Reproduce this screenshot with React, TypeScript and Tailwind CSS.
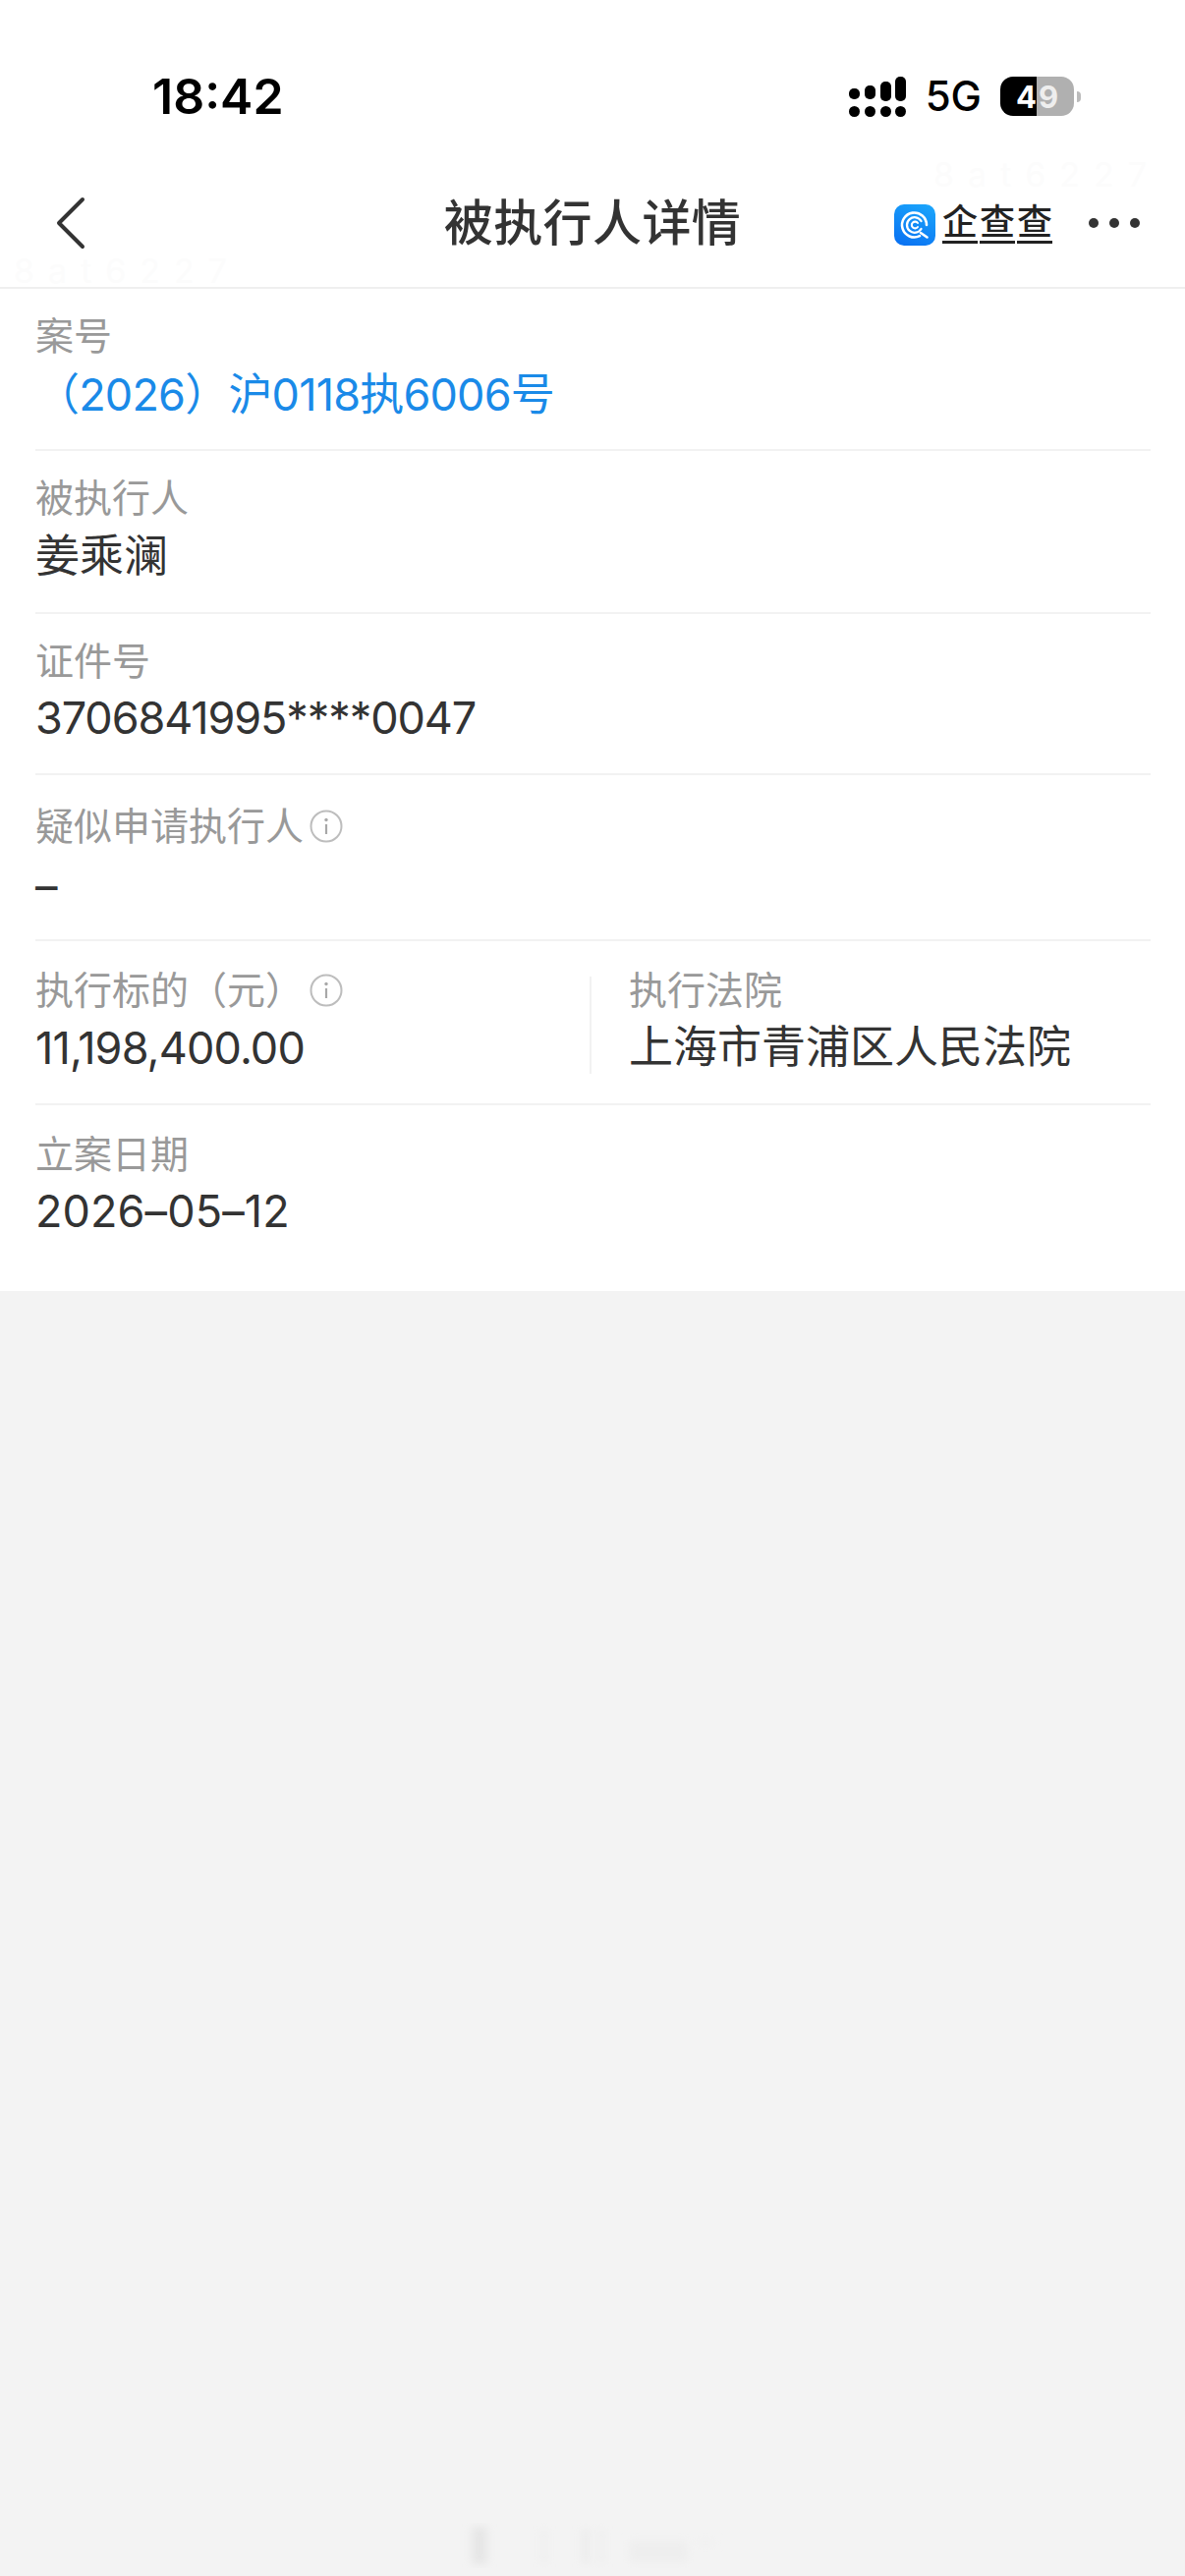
import React from 'react';

const InfoIcon = () => (
  <svg className="ml-[6px] shrink-0" width="34" height="34" viewBox="0 0 34 34" fill="none">
    <circle cx="17" cy="17" r="15.5" stroke="#bdbdbd" strokeWidth="2" />
    <circle cx="17" cy="10.5" r="1.7" fill="#a8a8a8" />
    <path d="M17 15v10" stroke="#a8a8a8" strokeWidth="2.2" />
  </svg>
);

const SignalIcon = () => (
  <svg width="58" height="41" viewBox="0 0 58 41" fill="#000">
    <rect x="0" y="12" width="11" height="11" rx="5" />
    <rect x="16" y="9" width="11" height="14" rx="5" />
    <rect x="32" y="5" width="11" height="20" rx="5" />
    <rect x="47" y="0" width="11" height="25" rx="5" />
    <circle cx="5.5" cy="35.5" r="5.5" />
    <circle cx="21.5" cy="35.5" r="5.5" />
    <circle cx="37.5" cy="35.5" r="5.5" />
    <circle cx="52.5" cy="35.5" r="5.5" />
  </svg>
);

const BrandLogo = () => (
  <svg className="mt-[3px]" width="42" height="42" viewBox="0 0 42 42" fill="none">
    <defs>
      <linearGradient id="brand" x1="30" y1="0" x2="12" y2="42" gradientUnits="userSpaceOnUse">
        <stop stopColor="#1aa3fb" />
        <stop offset="1" stopColor="#0a73f2" />
      </linearGradient>
    </defs>
    <rect width="42" height="42" rx="10" fill="url(#brand)" />
    <path d="M33 21a12.5 12.5 0 1 0-7 11.2" stroke="#fff" strokeWidth="2.6" strokeLinecap="round" />
    <path d="M27 29l6.5 4.500" stroke="#fff" strokeWidth="2.6" strokeLinecap="round" />
    <path d="M27.500 17a7.800 7.800 0 1 0 0 8" stroke="#fff" strokeWidth="2.3" strokeLinecap="round" />
    <path d="M24 19a3.400 3.400 0 1 0 0 4" stroke="#fff" strokeWidth="2.1" strokeLinecap="round" />
  </svg>
);

const Label = ({ children }: { children: React.ReactNode }) => (
  <div className="flex h-[56px] items-center text-[39px] leading-[56px] text-[#999999]">{children}</div>
);

const Value = ({
  children,
  className = 'text-[#333333]',
}: {
  children: React.ReactNode;
  className?: string;
}) => <div className={`h-[60px] text-[45px] leading-[60px] ${className}`}>{children}</div>;

export default function App() {
  return (
    <div className="relative min-h-[2622px] w-[1206px] overflow-hidden bg-[#f3f3f3] font-['Inter','Noto_Sans_CJK_SC',sans-serif]">
      <div className="bg-white">
        {/* Status bar */}
        <div className="flex h-[162px] items-center justify-between pl-[155px] pr-[106px] pt-[34px]">
          <span className="text-[50px] leading-none font-semibold text-black">18:42</span>
          <div className="flex items-center">
            <SignalIcon />
            <span className="ml-[20px] text-[42px] leading-none font-medium text-black">5G</span>
            <div className="relative ml-[19px] flex h-[40px] w-[75px] overflow-hidden rounded-[13px]">
              <div className="w-[37px] bg-black" />
              <div className="flex-1 bg-[#b0b0b0]" />
              <div className="absolute inset-0 flex items-center justify-center gap-[2px] text-[31px] leading-none font-bold">
                <span className="text-white">4</span>
                <span className="text-[#eeeeee]">9</span>
              </div>
            </div>
            <div className="ml-[3px] h-[11px] w-[4px] rounded-r-full bg-[#bbbbbb]" />
          </div>
        </div>

        {/* Header */}
        <header className="grid h-[132px] grid-cols-[1fr_auto_1fr] items-center border-b-2 border-[#efefef] pl-[46px] pr-[46px]">
          <svg className="ml-[11px]" width="30" height="54" viewBox="0 0 30 54" fill="none">
            <path d="M27 3 3 27l24 24" stroke="#333333" strokeWidth="4" strokeLinecap="round" strokeLinejoin="round" />
          </svg>
          <h1 className="text-[50px] leading-none font-medium tracking-[0.4px] text-[#333333]">被执行人详情</h1>
          <div className="flex items-center justify-end">
            <BrandLogo />
            <div className="ml-[7px] flex gap-[2px] text-[36px] leading-[38px] font-medium text-[#222222]">
              <span className="border-b-[3px] border-[#222222]">企</span>
              <span className="border-b-[3px] border-[#222222]">查</span>
              <span className="border-b-[3px] border-[#222222]">查</span>
            </div>
            <div className="ml-[37px] flex gap-[11px]">
              <span className="h-[10px] w-[10px] rounded-full bg-[#333333]" />
              <span className="h-[10px] w-[10px] rounded-full bg-[#333333]" />
              <span className="h-[10px] w-[10px] rounded-full bg-[#333333]" />
            </div>
          </div>
        </header>

        {/* Detail rows */}
        <main className="pl-[36px] pr-[35px]">
          <section className="h-[165px] border-b-2 border-[#f2f2f2] pt-[20px]">
            <Label>案号</Label>
            <Value className="mt-[2px] tracking-[-0.8px] text-[#1a8ae8]">（2026）沪0118执6006号</Value>
          </section>
          <section className="h-[166px] border-b-2 border-[#f2f2f2] pt-[20px]">
            <Label>被执行人</Label>
            <Value className="mt-[1px] text-[#333333]">姜乘澜</Value>
          </section>
          <section className="h-[164px] border-b-2 border-[#f2f2f2] pt-[20px]">
            <Label>证件号</Label>
            <Value className="tracking-[-1.1px] text-[#333333]">3706841995****0047</Value>
          </section>
          <section className="h-[169px] border-b-2 border-[#f2f2f2] pt-[24px]">
            <Label>
              疑似申请执行人
              <InfoIcon />
            </Label>
            <Value className="mt-[3px] text-[#333333]">–</Value>
          </section>
          <section className="flex h-[167px] border-b-2 border-[#f2f2f2] pt-[22px]">
            <div className="w-[564px]">
              <Label>
                执行标的（元）
                <InfoIcon />
              </Label>
              <Value className="mt-[1px] tracking-[-0.85px] text-[#333333]">11,198,400.00</Value>
            </div>
            <div className="mt-[14px] h-[99px] w-[2px] bg-[#f2f2f2]" />
            <div className="pl-[38px]">
              <Label>执行法院</Label>
              <Value className="text-[#333333]">上海市青浦区人民法院</Value>
            </div>
          </section>
          <section className="h-[189px] pt-[22px]">
            <Label>立案日期</Label>
            <Value className="tracking-[0.1px] text-[#333333]">2026–05–12</Value>
          </section>
        </main>
      </div>

      {/* Faint watermarks baked into the screenshot */}
      <div className="absolute left-[950px] top-[152px] text-[34px] tracking-[14px] whitespace-nowrap text-[#fcfcfc]">8at6227</div>
      <div className="absolute left-[14px] top-[250px] text-[34px] tracking-[14px] whitespace-nowrap text-[#fcfcfc]">8at6227</div>
      <svg className="absolute left-[470px] top-[2560px]" width="270" height="60" viewBox="0 0 270 60" fill="#ececec">
        <defs>
          <filter id="soft">
            <feGaussianBlur stdDeviation="4" />
          </filter>
        </defs>
        <g filter="url(#soft)">
          <rect x="10" y="12" width="16" height="38" fill="#e6e6e6" />
          <rect x="82" y="14" width="4" height="36" />
          <rect x="122" y="14" width="8" height="36" />
          <rect x="140" y="14" width="4" height="36" />
          <rect x="170" y="26" width="60" height="22" fill="#eeeeee" />
          <rect x="238" y="26" width="20" height="4" fill="#efefef" />
        </g>
      </svg>
    </div>
  );
}
